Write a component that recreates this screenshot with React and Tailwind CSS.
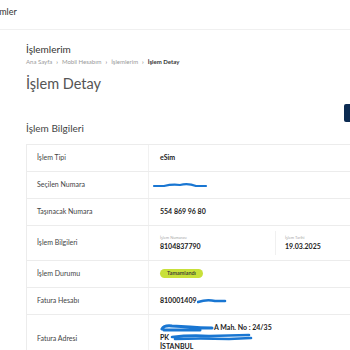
import React from "react";

function Scribble({ w, h = 8, d, sw = 3, className = "" }) {
  return (
    <svg width={w} height={h} viewBox={`0 0 ${w} ${h}`} className={`inline-block align-middle ${className}`}>
      <path d={d} stroke="#1976d2" strokeWidth={sw} fill="none" strokeLinecap="round" strokeLinejoin="round" />
    </svg>
  );
}

function Row({ label, children, h = "h-[27px]" }) {
  return (
    <div className={`flex ${h} border-b border-[#ececec]`}>
      <div className="w-[122px] shrink-0 flex items-center pl-[10px] border-r border-[#f1f1f1] text-[7px] text-[#444]">
        {label}
      </div>
      <div className="flex-1 flex items-center pl-[11px] text-[7px] font-bold text-[#222]">{children}</div>
    </div>
  );
}

export default function App() {
  return (
    <div className="w-[350px] h-[350px] overflow-hidden bg-white" style={{ fontFamily: "Lato, 'Noto Sans', sans-serif" }}>
      <div className="h-[30px] border-b border-[#f0f0f0] flex items-center pb-[5px]">
        <span className="-ml-[14px] text-[9px] text-[#333]">İşlemler</span>
      </div>
      <div className="pl-[26px] relative">
        <div className="pt-[14px] text-[10px] text-[#333] leading-none">İşlemlerim</div>
        <div className="mt-[5px] flex items-center gap-[4px] text-[6px] text-[#999] leading-none">
          <span>Ana Sayfa</span>
          <span className="text-[#666]">›</span>
          <span>Mobil Hesabım</span>
          <span className="text-[#666]">›</span>
          <span>İşlemlerim</span>
          <span className="text-[#666]">›</span>
          <span className="font-bold text-[#333]">İşlem Detay</span>
        </div>
        <div className="mt-[12px] text-[14.5px] text-[#555] leading-none">İşlem Detay</div>
        <div className="absolute right-0 top-[74px] w-[6px] h-[18px] bg-[#0c2b52] rounded-l-[2px]" />
        <div className="mt-[31px] text-[10px] text-[#444] leading-none">İşlem Bilgileri</div>
        <div className="mt-[11px] border-t border-l border-[#ececec]">
          <Row label="İşlem Tipi">eSim</Row>
          <Row label="Seçilen Numara">
            <Scribble w={56} h={8} d="M2 5 L12 5 Q20 3 28 4 Q36 2 44 5 L54 5" sw={2.2} className="-ml-[8px]" />
          </Row>
          <Row label="Taşınacak Numara">554 869 96 80</Row>
          <Row label="İşlem Bilgileri" h="h-[35px]">
            <div className="flex w-full items-stretch h-full py-[5px]">
              <div className="w-[116px] flex flex-col justify-center border-r border-[#f0f0f0]">
                <span className="text-[4px] font-normal text-[#aaa] leading-none">İşlem Numarası</span>
                <span className="mt-[3px] text-[7px] leading-none">8104837790</span>
              </div>
              <div className="pl-[9px] flex flex-col justify-center">
                <span className="text-[4px] font-normal text-[#aaa] leading-none">İşlem Tarihi</span>
                <span className="mt-[3px] text-[7px] leading-none">19.03.2025</span>
              </div>
            </div>
          </Row>
          <Row label="İşlem Durumu">
            <span className="bg-[#c8e03a] rounded-full px-[7px] py-[2px] text-[5.5px] font-semibold text-[#333] leading-none">
              Tamamlandı
            </span>
          </Row>
          <Row label="Fatura Hesabı">
            <span>810001409</span>
            <Scribble w={30} h={8} d="M1 5 Q10 2 18 4 L28 4" sw={2.6} />
          </Row>
          <Row label="Fatura Adresi" h="h-[48px]">
            <div className="flex flex-col leading-[9.5px] -mt-[2px]">
              <div className="flex items-center">
                <Scribble w={54} h={10} d="M2 6 Q4 2 12 3 L30 4 Q40 5 52 5 M4 7 L40 7" sw={3} />
                <span>A Mah. No : 24/35</span>
              </div>
              <div className="flex items-center">
                <span>PK</span>
                <Scribble w={84} h={9} d="M3 4 Q20 2 40 3 L80 2 M6 6 Q30 5 60 6 L82 5" sw={2.6} />
              </div>
              <div>İSTANBUL</div>
            </div>
          </Row>
        </div>
      </div>
    </div>
  );
}
